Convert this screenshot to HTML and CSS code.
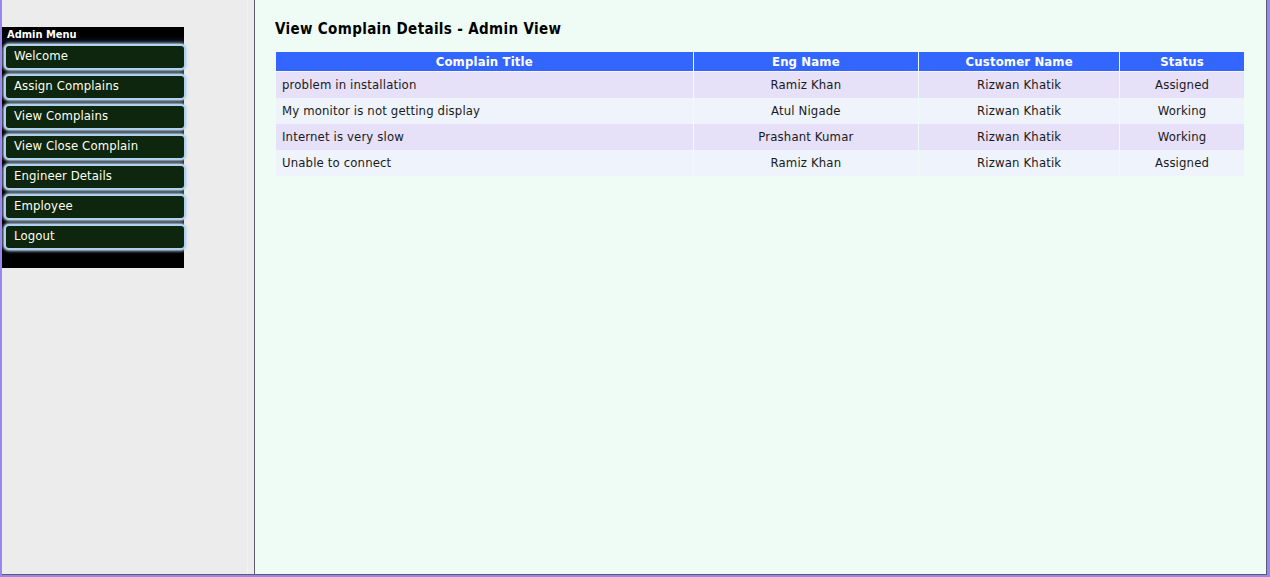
FILE: index.html
```html
<!DOCTYPE html>
<html>
<head>
<meta charset="utf-8">
<title>View Complain Details - Admin View</title>
<link rel="stylesheet" href="styles.css">
</head>
<body>
<div class="frame">
  <aside class="side">
    <nav class="menu">
      <div class="menu-head">Admin Menu</div>
      <ul class="menu-list">
        <li class="menu-item">Welcome</li>
        <li class="menu-item">Assign Complains</li>
        <li class="menu-item">View Complains</li>
        <li class="menu-item">View Close Complain</li>
        <li class="menu-item">Engineer Details</li>
        <li class="menu-item">Employee</li>
        <li class="menu-item">Logout</li>
      </ul>
      <div class="menu-foot"></div>
    </nav>
  </aside>
  <main class="main">
    <h1 class="title">View Complain Details - Admin View</h1>
    <table class="grid">
      <colgroup>
        <col class="c1"><col class="c2"><col class="c3"><col class="c4">
      </colgroup>
      <thead>
        <tr><th>Complain Title</th><th>Eng Name</th><th>Customer Name</th><th>Status</th></tr>
      </thead>
      <tbody>
        <tr class="odd"><td class="left">problem in installation</td><td>Ramiz Khan</td><td>Rizwan Khatik</td><td>Assigned</td></tr>
        <tr class="even"><td class="left">My monitor is not getting display</td><td>Atul Nigade</td><td>Rizwan Khatik</td><td>Working</td></tr>
        <tr class="odd"><td class="left">Internet is very slow</td><td>Prashant Kumar</td><td>Rizwan Khatik</td><td>Working</td></tr>
        <tr class="even"><td class="left">Unable to connect</td><td>Ramiz Khan</td><td>Rizwan Khatik</td><td>Assigned</td></tr>
      </tbody>
    </table>
  </main>
</div>
</body>
</html>
```

FILE: styles.css
```css
html, body {
  margin: 0;
  padding: 0;
}
body {
  background: #9a86ec;
  padding: 0 3px 2px 2px;
  font-family: "DejaVu Sans Condensed", "DejaVu Sans", sans-serif;
  overflow: hidden;
}
.frame {
  display: flex;
  height: 575px;
  box-sizing: border-box;
  border-right: 1px solid #585c70;
  border-bottom: 1px solid #585c70;
}
.side {
  width: 252px;
  flex: none;
  background: #ececec;
  border-right: 1px solid #5e5e6a;
  box-shadow: inset -6px 0 0 #ececec, inset -7px 0 0 #f3f3f3;
}
.menu {
  width: 182px;
  margin-top: 27px;
  background: #000;
}
.menu-head {
  height: 15px;
  background: linear-gradient(#000 0%, #000 60%, #0c1024 100%);
  color: #fff;
  font-size: 11px;
  font-weight: bold;
  line-height: 15px;
  padding-left: 5px;
}
.menu-list {
  list-style: none;
  margin: 0;
  padding: 2px 0 0 0;
  display: flex;
  flex-direction: column;
  gap: 4px;
}
.menu-item {
  width: 182px;
  height: 26px;
  box-sizing: border-box;
  margin-left: 2px;
  background: #0d260d;
  border: 2px solid #b0d2ee;
  border-radius: 5px;
  box-shadow: 0 0 3px 1px #c0dcf2;
  color: #fffff0;
  font-size: 13px;
  letter-spacing: 0.1px;
  line-height: 20px;
  padding-left: 8px;
}
.menu-foot {
  height: 18px;
}
.main {
  flex: 1;
  background: #effcf5;
  padding: 20px 0 0 20px;
}
.title {
  margin: 0 0 13px 0;
  font-size: 15px;
  font-weight: bold;
  letter-spacing: 0.35px;
  color: #000;
  line-height: 19px;
}
.grid {
  width: 970px;
  border-collapse: separate;
  border-spacing: 1px 0;
  font-size: 13px;
  letter-spacing: 0.15px;
  color: #1a1a1a;
}
.c1 { width: 417px; }
.c2 { width: 225px; }
.c3 { width: 200px; }
.c4 { width: 124px; }
.grid th {
  background: #3366ff;
  color: #fff;
  font-weight: bold;
  height: 19px;
  padding: 0;
  line-height: 19px;
  border-bottom: 1px solid #f4f6ff;
}
.grid td {
  height: 26px;
  padding: 0;
  text-align: center;
  line-height: 26px;
}
.grid td.left {
  text-align: left;
  padding-left: 6px;
}
.odd td { background: #e6e0f8; }
.even td { background: #eef3fc; }
```
